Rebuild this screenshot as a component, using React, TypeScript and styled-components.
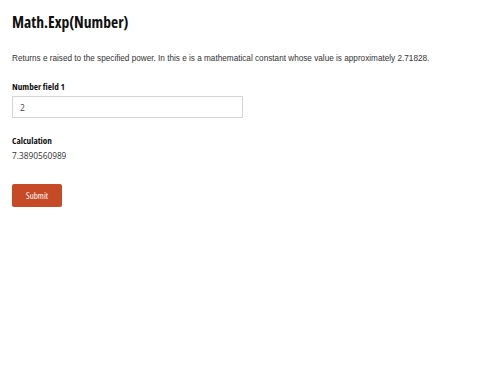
import { useState } from 'react';
import styled, { createGlobalStyle } from 'styled-components';

const GlobalStyle = createGlobalStyle`
  html, body { margin: 0; padding: 0; background: #fff; }
  body { font-family: "Liberation Sans", Arial, sans-serif; color: #222; }
`;

const Page = styled.div`
  padding: 11px 12px;
  display: flex;
  flex-direction: column;
`;

const Title = styled.h1`
  margin: 0 0 21px;
  font-family: "Open Sans", "DejaVu Sans Condensed", sans-serif;
  font-stretch: 75%;
  font-size: 15.6px;
  font-weight: 700;
  color: #111;
`;

const Description = styled.p`
  margin: 0 0 17px;
  font-size: 8.2px;
  color: #333;
  white-space: nowrap;
`;

const Field = styled.div`
  display: flex;
  flex-direction: column;
  margin-bottom: 16px;
`;

const Label = styled.label`
  font-family: "Open Sans", "DejaVu Sans Condensed", sans-serif;
  font-stretch: 75%;
  font-size: 9.2px;
  font-weight: 700;
  color: #111;
  margin-bottom: 3px;
`;

const Input = styled.input`
  box-sizing: border-box;
  width: 231px;
  height: 22px;
  padding: 0 7px;
  border: 1px solid #d4d4d4;
  font-family: "Open Sans", "DejaVu Sans Condensed", sans-serif;
  font-size: 8.5px;
  color: #444;
  outline: none;
`;

const Value = styled.div`
  font-family: "Open Sans", "DejaVu Sans Condensed", sans-serif;
  font-size: 8.3px;
  color: #333;
`;

const SubmitButton = styled.button`
  align-self: flex-start;
  width: 50px;
  height: 23px;
  margin-top: 7px;
  border: none;
  border-radius: 2px;
  background: #c64a25;
  color: #fff;
  font-family: "Open Sans", "DejaVu Sans Condensed", sans-serif;
  font-stretch: 75%;
  font-size: 9px;
  cursor: pointer;
`;

export default function App() {
  const [value, setValue] = useState('2');
  const n = parseFloat(value);
  const result = isNaN(n) ? '' : Math.exp(n).toFixed(10);

  return (
    <Page>
      <GlobalStyle />
      <Title>Math.Exp(Number)</Title>
      <Description>
        Returns e raised to the specified power. In this e is a mathematical constant whose value is approximately 2.71828.
      </Description>
      <Field>
        <Label>Number field 1</Label>
        <Input value={value} onChange={e => setValue(e.target.value)} />
      </Field>
      <Field>
        <Label>Calculation</Label>
        <Value>{result}</Value>
      </Field>
      <SubmitButton>Submit</SubmitButton>
    </Page>
  );
}
